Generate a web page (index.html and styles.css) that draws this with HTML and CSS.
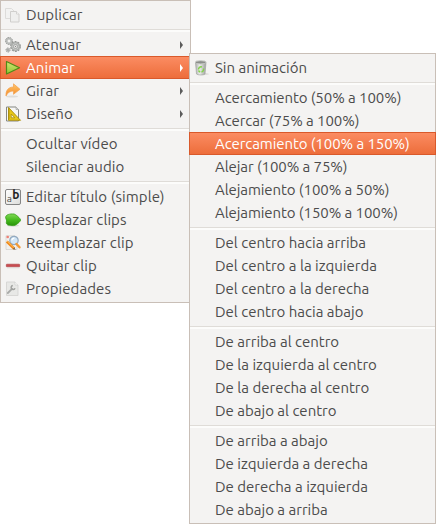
FILE: index.html
```
<!DOCTYPE html>
<html lang="es">
<head>
    <meta charset="UTF-8">
    <meta name="viewport" content="width=device-width, initial-scale=1.0">
    <title>Menú de clip</title>
    <link rel="stylesheet" href="styles.css">
</head>
<body>
    <div class="menus">
        <ul class="menu main-menu">
            <li class="item">
                <svg class="icon" viewBox="0 0 16 16"><path d="M.5 1.500h6l2.500 2.500v7.500H.5z" fill="#f2f2f1" stroke="#dddcda"/><path d="M5.500 4.500h6l2.500 2.500v8h-8.500z" fill="#efefee" stroke="#d0cfcd"/><path d="M11.500 4.500v2.500h2.500" fill="#fff" stroke="#d3d2d0"/></svg>
                <span>Duplicar</span>
            </li>
            <li class="separator"></li>
            <li class="item">
                <svg class="icon" viewBox="0 0 16 16"><g fill="#c8cac8" stroke="#939693"><circle cx="4" cy="4" r="3.500" stroke-dasharray="1.600 .8"/><circle cx="4" cy="4" r="2.600" stroke="#b6b8b6"/><circle cx="10.500" cy="9.500" r="4.700" stroke-width="1.400" stroke-dasharray="2 .95"/><circle cx="10.500" cy="9.500" r="3.900" stroke="#a7aaa7"/><circle cx="3" cy="13" r="2" stroke-dasharray="1.200 .6"/></g><circle cx="4" cy="4" r="1.200" fill="#f4f4f2"/><circle cx="10.500" cy="9.500" r="2" fill="#ededeb" stroke="#909390" stroke-width=".7"/><circle cx="10.500" cy="9.500" r=".7" fill="#888"/><circle cx="3" cy="13" r=".7" fill="#777"/></svg>
                <span>Atenuar</span>
                <i class="arrow"></i>
            </li>
            <li class="item selected">
                <svg class="icon" viewBox="0 0 16 16"><defs><linearGradient id="play" x2="0" y2="1"><stop stop-color="#d2e875"/><stop offset="1" stop-color="#8fc332"/></linearGradient></defs><path d="M1.500 1.500v12.500L14.500 7.700z" fill="url(#play)" stroke="#4f8a17" stroke-width="1.200" stroke-linejoin="round"/></svg>
                <span>Animar</span>
                <i class="arrow"></i>
            </li>
            <li class="item">
                <svg class="icon" viewBox="0 0 16 16"><defs><linearGradient id="turn" x2="0" y2="1"><stop stop-color="#ffc66b"/><stop offset="1" stop-color="#f48a27"/></linearGradient></defs><ellipse cx="7" cy="13.500" rx="6" ry="1" fill="#deddda"/><path d="M1 13C.7 7.500 3 4.200 8.500 4V.8L15 6.300l-6.500 5V8C5 8 2.600 9.700 1 13z" fill="url(#turn)" stroke="#f2a14e" stroke-width=".7" stroke-linejoin="round"/></svg>
                <span>Girar</span>
                <i class="arrow"></i>
            </li>
            <li class="item">
                <svg class="icon" viewBox="0 0 16 16"><path d="M1.500 1h9.500l2.500 2.500V15h-12z" fill="#f7f7f5" stroke="#858783" stroke-linejoin="round"/><path d="M11 1v2.500h2.500" fill="#ddd" stroke="#a1a29f" stroke-width=".7"/><path d="M3.500 1.500v12.800h12z" fill="#e7c719" stroke="#a98b05" stroke-width=".9"/><path d="M6.200 8v3.800h3.700z" fill="#f3f1dd" stroke="#a98b05" stroke-width=".8"/><path d="M3.700 4h1M3.700 6h1M3.700 8h1M3.700 10h1M3.700 12h1" stroke="#856c00" stroke-width=".7"/></svg>
                <span>Diseño</span>
                <i class="arrow"></i>
            </li>
            <li class="separator"></li>
            <li class="item no-icon"><span>Ocultar vídeo</span></li>
            <li class="item no-icon"><span>Silenciar audio</span></li>
            <li class="separator"></li>
            <li class="item">
                <svg class="icon" viewBox="0 0 16 16"><defs><linearGradient id="title" x2="1" y2="1"><stop stop-color="#fff"/><stop offset="1" stop-color="#dcdcda"/></linearGradient></defs><rect x=".5" y=".5" width="15" height="15" rx="1.500" fill="url(#title)" stroke="#858585"/><text class="letter-a" x="1.800" y="13">a</text><text class="letter-b" x="7.300" y="10">b</text></svg>
                <span>Editar título (simple)</span>
            </li>
            <li class="item">
                <svg class="icon" viewBox="0 0 16 16"><defs><linearGradient id="move" x2="0" y2="1"><stop stop-color="#82d957"/><stop offset=".5" stop-color="#48bc20"/><stop offset="1" stop-color="#289309"/></linearGradient></defs><ellipse cx="8" cy="13.600" rx="6" ry="1" fill="#d2d5cf"/><path d="M.6 5.500C.6 2.500 5 1.700 9 2c1.500.2 6.600 4.500 6.600 6S11 13.500 8.500 13.600C4 13.600 1.300 13 1.300 10.600c0-1 .4-1.500.2-2.500S.6 6.500.6 5.500z" fill="url(#move)" stroke="#319c13" stroke-width=".8"/></svg>
                <span>Desplazar clips</span>
            </li>
            <li class="item">
                <svg class="icon" viewBox="0 0 16 16"><path d="M1 .8h9l2 2V14.500H1z" fill="#f1f0ee" stroke="#d0cfcc" stroke-width=".7"/><circle cx="2.700" cy="2" r="1.300" fill="#ee8177"/><circle cx="9" cy="5.500" r="4.200" fill="#d2e6f7" stroke="#93aac0" stroke-width="1.200"/><path d="M6.700 5.300C7 3.900 8 3.200 9.300 3.200" fill="none" stroke="#fff" stroke-width="1.200"/><path d="M11.500 9l3 3.300" stroke="#f29a37" stroke-width="2.400" stroke-linecap="round"/><path d="M1.800 6.500l7.500 7.200" stroke="#f18a1d" stroke-width="2.600"/><path d="M2.200 6.200l7.200 6.900" stroke="#ffc15a" stroke-width=".8"/><path d="M9.300 12.300l1.400 2.600-2.900-1z" fill="#77644b"/></svg>
                <span>Reemplazar clip</span>
            </li>
            <li class="item">
                <svg class="icon" viewBox="0 0 16 16"><rect x="1.300" y="6.200" width="13.400" height="2.600" rx=".6" fill="#c94b50" stroke="#a73e41" stroke-width=".6"/><path d="M2 9.800h12.500" stroke="#dbd6d4" stroke-width=".8"/></svg>
                <span>Quitar clip</span>
            </li>
            <li class="item">
                <svg class="icon" viewBox="0 0 16 16"><path d="M1.500 1h8.500l3 3v10.500H1.500z" fill="#e8e8e6" stroke="#d5d5d3" stroke-width=".9"/><path d="M10 1v3h3" fill="#fafafa" stroke="#cfcfcd" stroke-width=".7"/><path d="M2.800 12L7 7.800" stroke="#a9aaa8" stroke-width="1.800" stroke-linecap="round"/><path d="M7.800 4.500A2 2 0 1 0 10 7.200" fill="none" stroke="#a0a19f" stroke-width="1.500"/></svg>
                <span>Propiedades</span>
            </li>
        </ul>

        <ul class="menu submenu">
            <li class="item">
                <svg class="icon" viewBox="0 0 16 16"><defs><linearGradient id="bin"><stop stop-color="#aeb0ad"/><stop offset=".4" stop-color="#ecedeb"/><stop offset="1" stop-color="#9b9e9a"/></linearGradient></defs><ellipse cx="9" cy="14" rx="6" ry="1.200" fill="#dddcd9"/><path d="M1.500 2.500l1 11.500c1.500 1.300 7 1.300 8.500 0l1-11.500z" fill="url(#bin)" stroke="#a4a6a2" stroke-width=".7"/><ellipse cx="6.700" cy="2.300" rx="5.500" ry="1.600" fill="#8b8e8a" stroke="#c5c7c3"/><path d="M4.500 9.500c0-2 1.500-3 3.500-2.500M9.300 8.500c.6 1.600-.1 3-1.800 3.400M6 12.200L4.500 10.500" fill="none" stroke="#83d34a" stroke-width="1.500"/></svg>
                <span>Sin animación</span>
            </li>
            <li class="separator"></li>
            <li class="item no-icon percent"><span>Acercamiento (50% a 100%)</span></li>
            <li class="item no-icon percent"><span>Acercar (75% a 100%)</span></li>
            <li class="item no-icon percent selected"><span>Acercamiento (100% a 150%)</span></li>
            <li class="item no-icon percent"><span>Alejar (100% a 75%)</span></li>
            <li class="item no-icon percent"><span>Alejamiento (100% a 50%)</span></li>
            <li class="item no-icon percent"><span>Alejamiento (150% a 100%)</span></li>
            <li class="separator"></li>
            <li class="item no-icon"><span>Del centro hacia arriba</span></li>
            <li class="item no-icon"><span>Del centro a la izquierda</span></li>
            <li class="item no-icon"><span>Del centro a la derecha</span></li>
            <li class="item no-icon"><span>Del centro hacia abajo</span></li>
            <li class="separator"></li>
            <li class="item no-icon"><span>De arriba al centro</span></li>
            <li class="item no-icon"><span>De la izquierda al centro</span></li>
            <li class="item no-icon"><span>De la derecha al centro</span></li>
            <li class="item no-icon"><span>De abajo al centro</span></li>
            <li class="separator"></li>
            <li class="item no-icon"><span>De arriba a abajo</span></li>
            <li class="item no-icon"><span>De izquierda a derecha</span></li>
            <li class="item no-icon"><span>De derecha a izquierda</span></li>
            <li class="item no-icon"><span>De abajo a arriba</span></li>
        </ul>
    </div>
</body>
</html>
```
FILE: styles.css
```
* {
    box-sizing: border-box;
}
body {
    margin: 0;
    background: #fff;
    color: #4c4c4c;
    font-family: Ubuntu, "Noto Sans", sans-serif;
    font-size: 15px;
}
.menus {
    display: flex;
    align-items: flex-start;
}
.menu {
    list-style: none;
    margin: 0;
    padding: 2px 0;
    border: 1px solid #c9bfb7;
    background: #f4f3f2;
}
.main-menu {
    width: 191px;
    flex: none;
    letter-spacing: 0.08px;
}
.submenu {
    position: relative;
    width: 247px;
    flex: none;
    margin: 53px 0 0 -2px;
}
.item {
    display: flex;
    align-items: center;
    gap: 5px;
    height: 23px;
    margin: 0 -1px;
    padding: 0 8px 0 5px;
    line-height: 23px;
    white-space: nowrap;
}
.no-icon {
    padding-left: 26px;
}
.percent {
    letter-spacing: -0.08px;
}
.selected {
    color: #fff;
    border: 1px solid #d9592b;
    padding-left: 4px;
    padding-right: 7px;
    background: linear-gradient(#fb8c62, #ed6d3b);
    line-height: 21px;
}
.no-icon.selected {
    padding-left: 25px;
}
.icon {
    width: 16px;
    height: 16px;
    flex: none;
    overflow: visible;
}
.arrow {
    margin-left: auto;
    border: solid transparent;
    border-width: 4px 0 4px 3px;
    border-left-color: #5b5b5b;
}
.selected .arrow {
    border-left-color: #fff;
}
.separator {
    height: 7px;
    padding-top: 3px;
}
.separator::before {
    content: "";
    display: block;
    height: 2px;
    border-top: 1px solid #dfdcd8;
    background: #fcfcfb;
}
.letter-a {
    font-size: 10px;
    fill: #444;
}
.letter-b {
    font-size: 12px;
    font-weight: bold;
    fill: #222;
}
```
